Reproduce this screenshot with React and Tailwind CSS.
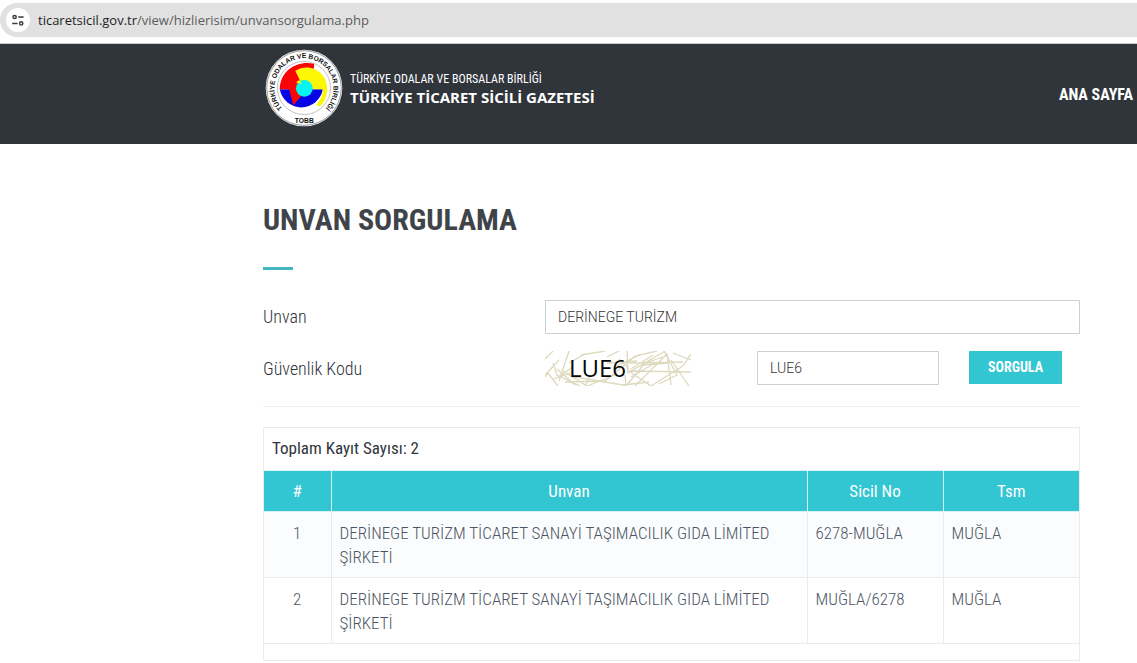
import React, { useState } from "react";

const rows = [
  {
    unvan: "DERİNEGE TURİZM TİCARET SANAYİ TAŞIMACILIK GIDA LİMİTED ŞİRKETİ",
    sicilNo: "6278-MUĞLA",
    tsm: "MUĞLA",
  },
  {
    unvan: "DERİNEGE TURİZM TİCARET SANAYİ TAŞIMACILIK GIDA LİMİTED ŞİRKETİ",
    sicilNo: "MUĞLA/6278",
    tsm: "MUĞLA",
  },
];

const AddressBar = () => (
  <div className="border-b border-[#c9cdd1] bg-white pt-[3px] pb-[6px]">
    <div className="flex h-[34px] items-center gap-2 rounded-l-full bg-[#e1e1e1] pl-[6px]">
      <button
        type="button"
        aria-label="Site bilgileri"
        className="flex h-6 w-6 items-center justify-center rounded-full bg-white"
      >
        <svg width="14" height="14" viewBox="0 0 14 14" fill="none" stroke="#3c3c3c" strokeWidth="1.5">
          <circle cx="3.6" cy="4" r="1.6" />
          <path d="M7.2 4H12.6M1.2 10.4H6.6" />
          <circle cx="10.2" cy="10.4" r="1.6" />
        </svg>
      </button>
      <a href="#" className="font-['Open_Sans',sans-serif] text-[13px] leading-5 text-[#5d5d5d]">
        <span className="text-[#1f1f1f]">ticaretsicil.gov.tr</span>
        /view/hizlierisim/unvansorgulama.php
      </a>
    </div>
  </div>
);

const Logo = () => (
  <svg width="78" height="78" viewBox="18 18 232 232" aria-label="TOBB">
    <defs>
      <path id="ring" d="M82 205A88 88 0 1 1 186 205" />
    </defs>
    <circle cx="134" cy="134" r="114" fill="#fff" />
    <circle cx="134" cy="134" r="111" fill="none" stroke="#333" strokeWidth="1.5" />
    <circle cx="134" cy="134" r="79" fill="none" stroke="#888" strokeWidth="1.5" />
    <path d="M62 138A65 65 0 0 0 190 138Z" fill="#0505e6" />
    <path d="M164 62C120 50 62 78 62 138L90 138L102 185L126 158L120 118L164 74Z" fill="#fa0505" />
    <path d="M108 83C150 56 204 86 203 136C203 160 194 178 180 190L171 184C182 170 190 158 190 138L156 138L122 112Z" fill="#fdf705" />
    <circle cx="135" cy="135" r="25" fill="#05f5f5" />
    <path d="M110 118L120 110L128 122Z" fill="#fdf705" />
    <text className="font-['Liberation_Sans',sans-serif] font-bold" fontSize="20" fill="#111">
      <textPath href="#ring" startOffset="50%" textAnchor="middle">
        TÜRKİYE ODALAR VE BORSALAR BİRLİĞİ
      </textPath>
    </text>
    <text
      x="135"
      y="238"
      textAnchor="middle"
      className="font-['Liberation_Sans',sans-serif] font-bold"
      fontSize="20"
      fill="#111"
    >
      TOBB
    </text>
  </svg>
);

const Header = () => (
  <header className="flex h-[100px] items-start justify-between bg-[#30343b] pt-[5px] pl-[265px] pr-1 text-white">
    <a href="#" className="flex items-center gap-[7px]">
      <Logo />
      <div className="pt-[2px]">
        <p className="text-xs leading-4">TÜRKİYE ODALAR VE BORSALAR BİRLİĞİ</p>
        <p className="font-['Open_Sans',sans-serif] text-[15px] leading-5 font-bold">
          TÜRKİYE TİCARET SİCİLİ GAZETESİ
        </p>
      </div>
    </a>
    <nav className="pt-[34px]">
      <a href="#" className="text-base leading-5 font-bold">
        ANA SAYFA
      </a>
    </nav>
  </header>
);

const Captcha = () => (
  <svg width="146" height="35" viewBox="0 0 146 35" className="shrink-0" aria-label="Güvenlik kodu">
    <g fill="none" stroke="#dcd9bd" strokeWidth="1.3">
      <path d="M0 8L8 0M0 24L14 9M2 21L13 35M8 12L12 24L35 35M14 30L24 0M12 27L28 16" />
      <path d="M18 20L42 35L70 24M20 31L60 30L90 5L112 0M40 35L46 24M62 12L92 10" />
      <path d="M30 26L78 34L104 31M82 0L83 22L120 0M84 20L106 35M84 20L146 21M82 34L100 12L118 6" />
      <path d="M84 12L138 11M90 35L122 3L126 34M86 18L108 4M138 15L146 3M119 0L132 24L114 33" />
      <path d="M126 9L144 35M86 26L110 12M0 26L3 22M80 24L81 35M8 28L26 22M36 4L60 0M24 12L40 3" />
      <path d="M70 16L96 3M74 8L84 18M106 35L138 15M128 2L146 9M12 18L30 34M96 14L124 12M62 6L74 0" />
    </g>
    <text x="24" y="26" className="font-['Open_Sans',sans-serif]" fontSize="24" fill="#050505">
      LUE6
    </text>
  </svg>
);

const SearchForm = () => {
  const [unvan, setUnvan] = useState("DERİNEGE TURİZM");
  const [kod, setKod] = useState("LUE6");

  return (
    <form
      onSubmit={(e) => e.preventDefault()}
      className="grid grid-cols-[282px_minmax(0,1fr)] items-center gap-y-[17px] border-b border-[#eeeeee] pb-5"
    >
      <label htmlFor="unvan" className="text-[18px] leading-6 font-light text-[#30343b]">
        Unvan
      </label>
      <input
        id="unvan"
        type="text"
        value={unvan}
        onChange={(e) => setUnvan(e.target.value)}
        className="h-[34px] w-full border border-[#ccd1d5] px-3 font-['Roboto',sans-serif] text-[14px] font-light text-[#333]"
      />
      <label htmlFor="kod" className="text-[18px] leading-6 font-light text-[#30343b]">
        Güvenlik Kodu
      </label>
      <div className="flex items-start pr-[18px]">
        <Captcha />
        <input
          id="kod"
          type="text"
          value={kod}
          onChange={(e) => setKod(e.target.value)}
          className="ml-[66px] h-[34px] min-w-0 flex-1 border border-[#ccd1d5] px-3 font-['Roboto',sans-serif] text-[14px] font-light text-[#333]"
        />
        <button
          type="submit"
          className="ml-[30px] h-[33px] w-[93px] shrink-0 cursor-pointer bg-[#32c5d2] text-[14px] font-bold text-white"
        >
          SORGULA
        </button>
      </div>
    </form>
  );
};

const ResultTable = () => (
  <div className="mt-5 border border-[#e9ecee]">
    <h2 className="px-2 pt-2 pb-[10px] text-[17px] leading-6 text-[#30343b]">Toplam Kayıt Sayısı: 2</h2>
    <table className="w-full table-fixed border-collapse border-b border-[#e9ecee] text-[17px] leading-6">
      <colgroup>
        <col className="w-[67px]" />
        <col />
        <col className="w-[136px]" />
        <col className="w-[136px]" />
      </colgroup>
      <thead>
        <tr className="border-y border-[#d9f2f4] bg-[#32c5d2] text-white">
          <th className="border-r border-[#d9f2f4] p-2 font-normal">#</th>
          <th className="border-r border-[#d9f2f4] p-2 font-normal">Unvan</th>
          <th className="border-r border-[#d9f2f4] p-2 font-normal">Sicil No</th>
          <th className="p-2 font-normal">Tsm</th>
        </tr>
      </thead>
      <tbody>
        {rows.map((row, i) => (
          <tr key={i} className="border-b border-[#e9ecee] align-top font-light text-[#4b5563] odd:bg-[#fbfcfd]">
            <td className="border-r border-[#e9ecee] px-2 pt-[9px] pb-2 text-center">{i + 1}</td>
            <td className="border-r border-[#e9ecee] px-2 pt-[9px] pb-2">{row.unvan}</td>
            <td className="border-r border-[#e9ecee] px-2 pt-[9px] pb-2">{row.sicilNo}</td>
            <td className="px-2 pt-[9px] pb-2">{row.tsm}</td>
          </tr>
        ))}
      </tbody>
    </table>
    <div className="h-4"></div>
  </div>
);

const App = () => {
  return (
    <div className="bg-white font-['Roboto_Condensed','Roboto',sans-serif]">
      <AddressBar />
      <Header />
      <main className="pt-14 pr-[57px] pl-[263px]">
        <h1 className="text-[30px] leading-10 font-bold text-[#3f444a]">UNVAN SORGULAMA</h1>
        <div className="mt-[27px] mb-[30px] h-[3px] w-[30px] bg-[#44b6c2]"></div>
        <SearchForm />
        <ResultTable />
      </main>
    </div>
  );
};

export default App;
